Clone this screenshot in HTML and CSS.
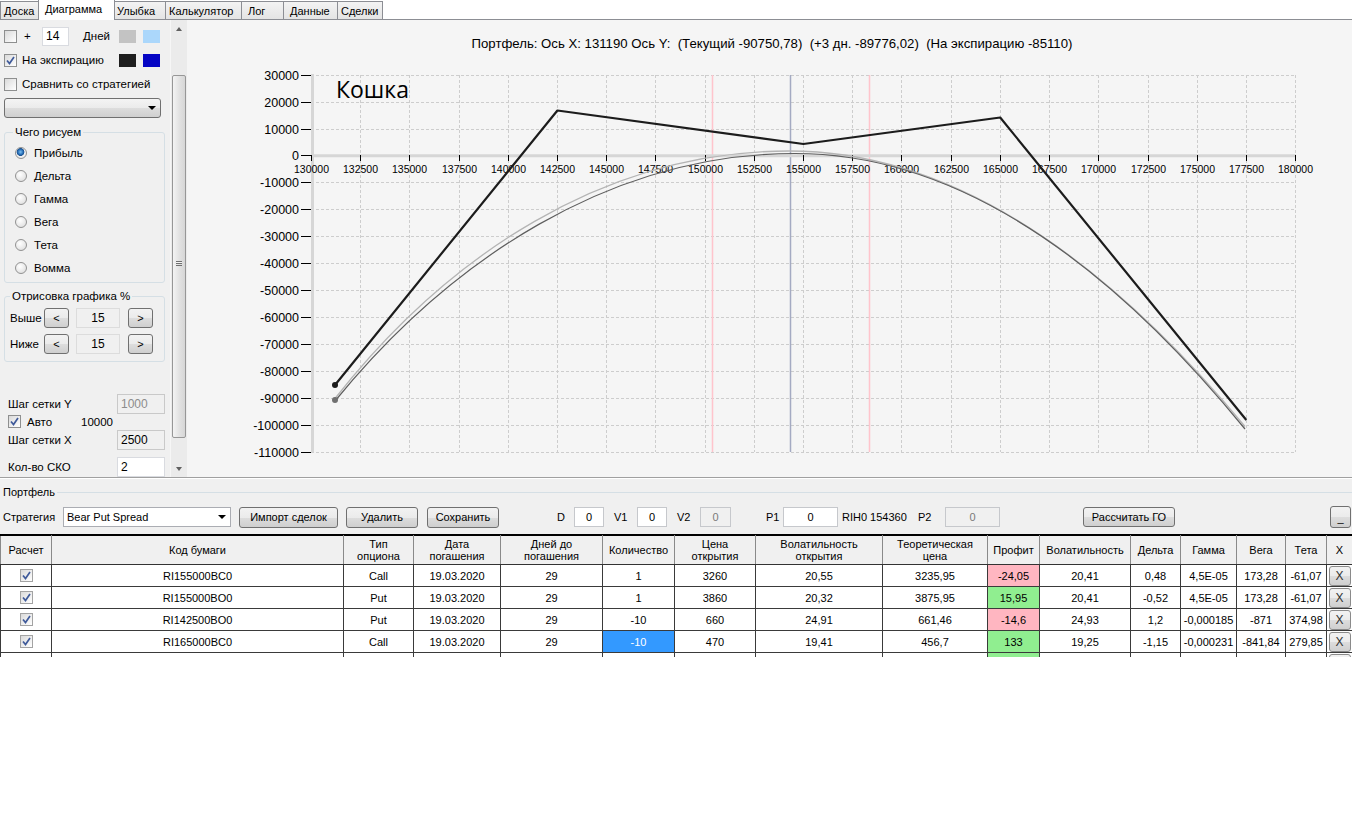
FILE: index.html
```html
<!DOCTYPE html>
<html lang="ru">
<head>
<meta charset="utf-8">
<title>Диаграмма</title>
<link rel="stylesheet" href="styles.css">
</head>
<body>
<div class="tabs">
  <div class="tab t1">Доска</div>
  <div class="tab t2 active">Диаграмма</div>
  <div class="tab t3">Улыбка</div>
  <div class="tab t4">Калькулятор</div>
  <div class="tab t5">Лог</div>
  <div class="tab t6">Данные</div>
  <div class="tab t7">Сделки</div>
</div>

<div class="main">
  <div class="sidebar">
    <div class="srow">
      <span class="cb"></span>
      <span class="plus">+</span>
      <span class="tb days">14</span>
      <span class="dn">Дней</span>
      <span class="sw sw-gray"></span>
      <span class="sw sw-lblue"></span>
    </div>
    <div class="srow">
      <span class="cb"><svg viewBox="0 0 11 11"><path d="M2 5.5 L4.5 8.5 L9 2" /></svg></span>
      <span class="slbl w97">На экспирацию</span>
      <span class="sw sw-black"></span>
      <span class="sw sw-blue"></span>
    </div>
    <div class="srow">
      <span class="cb"></span>
      <span class="slbl">Сравнить со стратегией</span>
    </div>
    <div class="scombo"><span class="arrow"></span></div>

    <fieldset class="grp g1">
      <legend>Чего рисуем</legend>
      <div class="rrow"><span class="rb on"></span><span>Прибыль</span></div>
      <div class="rrow"><span class="rb"></span><span>Дельта</span></div>
      <div class="rrow"><span class="rb"></span><span>Гамма</span></div>
      <div class="rrow"><span class="rb"></span><span>Вега</span></div>
      <div class="rrow"><span class="rb"></span><span>Тета</span></div>
      <div class="rrow"><span class="rb"></span><span>Вомма</span></div>
    </fieldset>

    <fieldset class="grp g2">
      <legend>Отрисовка графика %</legend>
      <div class="nrow"><span class="nlbl">Выше</span><span class="btn sbtn">&lt;</span><span class="tb num">15</span><span class="btn sbtn">&gt;</span></div>
      <div class="nrow"><span class="nlbl">Ниже</span><span class="btn sbtn">&lt;</span><span class="tb num">15</span><span class="btn sbtn">&gt;</span></div>
    </fieldset>

    <div class="prow pa"><span class="plbl">Шаг сетки Y</span><span class="tb ptb dis">1000</span></div>
    <div class="prow pb"><span class="cb"><svg viewBox="0 0 11 11"><path d="M2 5.5 L4.5 8.5 L9 2" /></svg></span><span class="auto">Авто</span><span class="autov">10000</span></div>
    <div class="prow pc"><span class="plbl">Шаг сетки X</span><span class="tb ptb ro">2500</span></div>
    <div class="prow pd"><span class="plbl">Кол-во СКО</span><span class="tb ptb">2</span></div>
  </div>

  <div class="vscroll">
    <div class="sarrow up"></div>
    <div class="strack">
      <div class="thumb"><span class="grip"></span></div>
    </div>
    <div class="sarrow down"></div>
  </div>

  <div class="chart">
    <svg class="plot" width="1165" height="457" viewBox="187 20 1165 457">
      <text class="title" x="772" y="48">Портфель: Ось X: 131190 Ось Y:  (Текущий -90750,78)  (+3 дн. -89776,02)  (На экспирацию -85110)</text>
      <path class="gridl" d="M311 75.5H1296M311 102.5H1296M311 129.5H1296M311 182.5H1296M311 209.5H1296M311 236.5H1296M311 263.5H1296M311 290.5H1296M311 317.5H1296M311 344.5H1296M311 371.5H1296M311 398.5H1296M311 425.5H1296M311 452.5H1296M360.5 75V452M409.5 75V452M459.5 75V452M508.5 75V452M557.5 75V452M606.5 75V452M655.5 75V452M705.5 75V452M754.5 75V452M803.5 75V452M852.5 75V452M901.5 75V452M951.5 75V452M1000.5 75V452M1049.5 75V452M1098.5 75V452M1148.5 75V452M1197.5 75V452M1246.5 75V452M1295.5 75V452"/>
      <line class="vl-pink" x1="712.5" y1="75" x2="712.5" y2="452"/>
      <line class="vl-pink" x1="869.5" y1="75" x2="869.5" y2="452"/>
      <line class="vl-blue" x1="790.5" y1="75" x2="790.5" y2="452"/>
      <line class="axis" x1="311" y1="155.7" x2="1296" y2="155.7"/>
      <line class="axis" x1="312.5" y1="74" x2="312.5" y2="452.5"/>
      <path class="ticks" d="M301 75.5H311M301 102.5H311M301 129.5H311M301 155.5H311M301 182.5H311M301 209.5H311M301 236.5H311M301 263.5H311M301 290.5H311M301 317.5H311M301 344.5H311M301 371.5H311M301 398.5H311M301 425.5H311M301 452.5H311M311.5 155V161M360.5 155V161M409.5 155V161M459.5 155V161M508.5 155V161M557.5 155V161M606.5 155V161M655.5 155V161M705.5 155V161M754.5 155V161M803.5 155V161M852.5 155V161M901.5 155V161M951.5 155V161M1000.5 155V161M1049.5 155V161M1098.5 155V161M1148.5 155V161M1197.5 155V161M1246.5 155V161M1295.5 155V161"/>
      <g class="ylab">
        <text x="299" y="80">30000</text>
        <text x="299" y="107">20000</text>
        <text x="299" y="134">10000</text>
        <text x="299" y="160">0</text>
        <text x="299" y="187">-10000</text>
        <text x="299" y="214">-20000</text>
        <text x="299" y="241">-30000</text>
        <text x="299" y="268">-40000</text>
        <text x="299" y="295">-50000</text>
        <text x="299" y="322">-60000</text>
        <text x="299" y="349">-70000</text>
        <text x="299" y="376">-80000</text>
        <text x="299" y="403">-90000</text>
        <text x="299" y="430">-100000</text>
        <text x="299" y="457">-110000</text>
      </g>
      <g class="xlab">
        <text x="311.5" y="172.5">130000</text>
        <text x="360.5" y="172.5">132500</text>
        <text x="409.5" y="172.5">135000</text>
        <text x="459.5" y="172.5">137500</text>
        <text x="508.5" y="172.5">140000</text>
        <text x="557.5" y="172.5">142500</text>
        <text x="606.5" y="172.5">145000</text>
        <text x="655.5" y="172.5">147500</text>
        <text x="705.5" y="172.5">150000</text>
        <text x="754.5" y="172.5">152500</text>
        <text x="803.5" y="172.5">155000</text>
        <text x="852.5" y="172.5">157500</text>
        <text x="901.5" y="172.5">160000</text>
        <text x="951.5" y="172.5">162500</text>
        <text x="1000.5" y="172.5">165000</text>
        <text x="1049.5" y="172.5">167500</text>
        <text x="1098.5" y="172.5">170000</text>
        <text x="1148.5" y="172.5">172500</text>
        <text x="1197.5" y="172.5">175000</text>
        <text x="1246.5" y="172.5">177500</text>
        <text x="1295.5" y="172.5">180000</text>
      </g>
      <path class="cur-light" d="M335 398.5 C447 256 604 151 789 151 Q1016 151 1245 426.5"/>
      <path class="cur-dark" d="M335 401 C450 260 610 153.5 795 153.5 Q1020 153.5 1245 429"/>
      <polyline class="expiry" points="335,385 557.4,110.5 803.4,144 1000.2,117.5 1246.3,420"/>
      <circle class="dot-dark" cx="335" cy="385" r="3"/>
      <circle class="dot-gray" cx="335" cy="400" r="3"/>
      <text class="name" x="336" y="98">Кошка</text>
    </svg>
  </div>
</div>

<div class="portfolio">
  <div class="ptitle"><span>Портфель</span><span class="pline"></span></div>
  <div class="toolbar">
    <span class="lbl l-strat">Стратегия</span>
    <span class="combo"><span class="ctext">Bear Put Spread</span><span class="arrow"></span></span>
    <span class="btn b-import">Импорт сделок</span>
    <span class="btn b-del">Удалить</span>
    <span class="btn b-save">Сохранить</span>
    <span class="lbl l-d">D</span>
    <span class="tb in30">0</span>
    <span class="lbl l-v1">V1</span>
    <span class="tb in30">0</span>
    <span class="lbl l-v2">V2</span>
    <span class="tb in31 dis">0</span>
    <span class="lbl l-p1">P1</span>
    <span class="tb in55">0</span>
    <span class="lbl l-rih">RIH0 154360</span>
    <span class="lbl l-p2">P2</span>
    <span class="tb in55 dis">0</span>
    <span class="btn b-go">Рассчитать ГО</span>
    <span class="btn b-min">_</span>
  </div>
</div>

<div class="gridwrap">
  <table class="grid">
    <colgroup>
      <col class="c1"><col class="c2"><col class="c3"><col class="c4"><col class="c5"><col class="c6"><col class="c7"><col class="c8"><col class="c9"><col class="c10"><col class="c11"><col class="c12"><col class="c13"><col class="c14"><col class="c15"><col class="c16">
    </colgroup>
    <thead>
      <tr>
        <th>Расчет</th><th>Код бумаги</th><th>Тип<br>опциона</th><th>Дата<br>погашения</th><th>Дней до<br>погашения</th><th>Количество</th><th>Цена<br>открытия</th><th>Волатильность<br>открытия</th><th>Теоретическая<br>цена</th><th>Профит</th><th>Волатильность</th><th>Дельта</th><th>Гамма</th><th>Вега</th><th>Тета</th><th>X</th>
      </tr>
    </thead>
    <tbody>
      <tr>
        <td><span class="cb gcb"><svg viewBox="0 0 11 11"><path d="M2 5.5 L4.5 8.5 L9 2" /></svg></span></td>
        <td>RI155000BC0</td><td>Call</td><td>19.03.2020</td><td>29</td><td>1</td><td>3260</td><td>20,55</td><td>3235,95</td><td class="neg">-24,05</td><td>20,41</td><td>0,48</td><td>4,5E-05</td><td>173,28</td><td>-61,07</td>
        <td class="xc"><span class="btn xbtn">X</span></td>
      </tr>
      <tr>
        <td><span class="cb gcb"><svg viewBox="0 0 11 11"><path d="M2 5.5 L4.5 8.5 L9 2" /></svg></span></td>
        <td>RI155000BO0</td><td>Put</td><td>19.03.2020</td><td>29</td><td>1</td><td>3860</td><td>20,32</td><td>3875,95</td><td class="pos">15,95</td><td>20,41</td><td>-0,52</td><td>4,5E-05</td><td>173,28</td><td>-61,07</td>
        <td class="xc"><span class="btn xbtn">X</span></td>
      </tr>
      <tr>
        <td><span class="cb gcb"><svg viewBox="0 0 11 11"><path d="M2 5.5 L4.5 8.5 L9 2" /></svg></span></td>
        <td>RI142500BO0</td><td>Put</td><td>19.03.2020</td><td>29</td><td>-10</td><td>660</td><td>24,91</td><td>661,46</td><td class="neg">-14,6</td><td>24,93</td><td>1,2</td><td>-0,000185</td><td>-871</td><td>374,98</td>
        <td class="xc"><span class="btn xbtn">X</span></td>
      </tr>
      <tr>
        <td><span class="cb gcb"><svg viewBox="0 0 11 11"><path d="M2 5.5 L4.5 8.5 L9 2" /></svg></span></td>
        <td>RI165000BC0</td><td>Call</td><td>19.03.2020</td><td>29</td><td class="sel">-10</td><td>470</td><td>19,41</td><td>456,7</td><td class="pos">133</td><td>19,25</td><td>-1,15</td><td>-0,000231</td><td>-841,84</td><td>279,85</td>
        <td class="xc"><span class="btn xbtn">X</span></td>
      </tr>
      <tr>
        <td></td><td></td><td></td><td></td><td></td><td></td><td></td><td></td><td></td><td class="pos"></td><td></td><td></td><td></td><td></td><td></td>
        <td class="xc"><span class="btn xbtn"></span></td>
      </tr>
    </tbody>
  </table>
</div>
</body>
</html>
```

FILE: styles.css
```css
html, body {
  margin: 0;
  padding: 0;
}
body {
  width: 1352px;
  height: 816px;
  overflow: hidden;
  background: #ffffff;
  font-family: "Liberation Sans", Arial, sans-serif;
  font-size: 11px;
  color: #000;
}

/* ---------- tabs ---------- */
.tabs {
  display: flex;
  align-items: flex-end;
  height: 20px;
  box-sizing: border-box;
  border-bottom: 1px solid #8c8e94;
  background: #ffffff;
}
.tab {
  height: 18px;
  box-sizing: border-box;
  border: 1px solid #8c8e94;
  border-bottom: none;
  margin-right: -1px;
  margin-bottom: 0;
  background: linear-gradient(#f3f3f3, #e4e4e4);
  display: flex;
  align-items: center;
  padding-left: 3px;
  font-size: 11px;
  line-height: 14px;
}
.tab.active {
  height: 21px;
  margin-bottom: -1px;
  margin-left: -2px;
  margin-right: -2px;
  background: #ffffff;
  z-index: 2;
  padding-left: 6px;
  padding-bottom: 3px;
}
.t1 { width: 41px; }
.t2 { width: 77px; }
.t3 { width: 53px; }
.t4 { width: 77px; }
.t5 { width: 43px; padding-left: 6px; }
.t6 { width: 55px; padding-left: 6px; }
.t7 { width: 46px; }

/* ---------- main ---------- */
.main {
  display: flex;
  height: 457px;
}
.sidebar {
  width: 170px;
  flex: none;
  background: #f0f0f0;
  box-sizing: border-box;
  padding: 4px 0 0 4px;
  font-size: 11.5px;
}
.srow {
  height: 24px;
  display: flex;
  align-items: center;
}
.cb {
  width: 13px;
  height: 13px;
  box-sizing: border-box;
  border: 1px solid #8e8f8f;
  background: linear-gradient(135deg, #dadada 0%, #f4f4f4 70%, #ffffff 100%);
  display: inline-flex;
  align-items: center;
  justify-content: center;
  flex: none;
}
.cb svg {
  width: 11px;
  height: 11px;
}
.cb path {
  fill: none;
  stroke: #3f5a9a;
  stroke-width: 1.7;
}
.plus {
  margin-left: 7px;
  width: 18px;
}
.tb {
  box-sizing: border-box;
  height: 19px;
  border: 1px solid #d9dbe0;
  background: #ffffff;
  display: inline-flex;
  align-items: center;
  padding-left: 3px;
  flex: none;
}
.days {
  width: 27px;
  font-size: 12px;
}
.dn {
  margin-left: 14px;
  width: 36px;
}
.sw {
  width: 17px;
  height: 13px;
  flex: none;
}
.sw + .sw { margin-left: 7px; }
.sw-gray { background: #c3c3c3; }
.sw-lblue { background: #abd7fb; }
.sw-black { background: #1e1e1e; }
.sw-blue { background: #0505c4; }
.slbl { margin-left: 5px; }
.w97 { width: 97px; }

.scombo {
  margin-top: 2px;
  width: 157px;
  height: 20px;
  box-sizing: border-box;
  border: 1px solid #707070;
  border-radius: 3px;
  background: linear-gradient(#f4f4f4 0%, #ebebeb 50%, #dddddd 51%, #d0d0d0 100%);
  display: flex;
  align-items: center;
  justify-content: flex-end;
  padding-right: 4px;
}
.arrow {
  width: 0;
  height: 0;
  border-left: 4px solid transparent;
  border-right: 4px solid transparent;
  border-top: 4px solid #000;
}

.grp {
  margin: 0;
  width: 161px;
  box-sizing: border-box;
  border: 1px solid #d5dfe5;
  border-radius: 3px;
  padding: 0 0 0 8px;
}
.grp legend {
  padding: 0 2px;
  margin-left: 0;
  line-height: 13px;
  font-size: 11.5px;
}
.g1 {
  margin-top: 8px;
  padding-top: 2px;
  padding-bottom: 3px;
}
.rrow {
  height: 23px;
  display: flex;
  align-items: center;
}
.rb {
  width: 12px;
  height: 12px;
  box-sizing: border-box;
  border-radius: 50%;
  border: 1px solid #929292;
  background: radial-gradient(circle at 40% 35%, #ffffff 0%, #e8e8e8 60%, #d6d6d6 100%);
  margin-right: 7px;
  margin-left: 2px;
  flex: none;
}
.rb.on {
  background: radial-gradient(circle at 45% 40%, #7cc0f2 0px, #2a70b8 2.5px, #184f8e 3.6px, #f4f4f4 4.2px, #dedede 100%);
}
.g2 {
  margin-top: 7px;
  padding-top: 2px;
  padding-bottom: 4px;
  padding-left: 5px;
}
.nrow {
  height: 26px;
  display: flex;
  align-items: center;
}
.nlbl { width: 34px; font-size: 11.5px; }
.btn {
  box-sizing: border-box;
  border: 1px solid #707070;
  border-radius: 3px;
  background: linear-gradient(#f2f2f2 0%, #ebebeb 50%, #dddddd 51%, #cfcfcf 100%);
  display: inline-flex;
  align-items: center;
  justify-content: center;
  flex: none;
  font-size: 11px;
}
.sbtn {
  width: 25px;
  height: 20px;
  font-size: 11px;
}
.num {
  width: 44px;
  height: 20px;
  margin: 0 8px 0 7px;
  justify-content: center;
  padding-left: 0;
  background: #f0f0f0;
  border-color: #dcdcdc;
  font-size: 12px;
}

.prow {
  display: flex;
  align-items: center;
  padding-left: 4px;
}
.plbl { width: 109px; }
.ptb {
  width: 48px;
  height: 20px;
  font-size: 12px;
}
.ptb.dis {
  background: #f0f0f0;
  color: #8c8c8c;
  border-color: #c9c9c9;
}
.ptb.ro {
  background: #f0f0f0;
  border-color: #c9c9c9;
}
.pa { margin-top: 32px; height: 20px; }
.pb { height: 15px; }
.auto { margin-left: 6px; width: 54px; }
.pc { margin-top: 1px; height: 20px; }
.pd { margin-top: 7px; height: 20px; }

/* ---------- scrollbar ---------- */
.vscroll {
  width: 17px;
  flex: none;
  background: #ebebeb;
  display: flex;
  flex-direction: column;
  border-left: 1px solid #f6f6f6;
  box-sizing: border-box;
}
.sarrow {
  height: 17px;
  display: flex;
  align-items: center;
  justify-content: center;
}
.sarrow::before {
  content: "";
  width: 0;
  height: 0;
  border-left: 3.5px solid transparent;
  border-right: 3.5px solid transparent;
}
.sarrow.up::before { border-bottom: 4px solid #606060; }
.sarrow.down::before { border-top: 4px solid #606060; }
.strack {
  flex: 1;
  padding-top: 38px;
  padding-bottom: 22px;
  display: flex;
}
.thumb {
  flex: 1;
  margin: 0 1px;
  border: 1px solid #979797;
  border-radius: 2px;
  background: linear-gradient(90deg, #f4f4f4, #e3e3e3 50%, #d6d6d6);
  display: flex;
  align-items: center;
  justify-content: center;
}
.grip {
  width: 6px;
  height: 5px;
  border-top: 1px solid #6f6f6f;
  border-bottom: 1px solid #6f6f6f;
  box-sizing: border-box;
  background: linear-gradient(#f5f5f5 0 1px, #6f6f6f 1px 2px, transparent 2px);
  margin-top: 14px;
}

/* ---------- chart ---------- */
.chart {
  flex: 1;
  background: #f5f5f5;
  overflow: hidden;
}
.plot {
  display: block;
  font-family: "Liberation Sans", Arial, sans-serif;
}
.title {
  font-size: 13.2px;
  text-anchor: middle;
  white-space: pre;
  fill: #000;
}
.gridl {
  fill: none;
  stroke: #cdcdcd;
  stroke-width: 1;
  stroke-dasharray: 3 2;
}
.vl-pink {
  stroke: #ffc4cc;
  stroke-width: 1.5;
}
.vl-blue {
  stroke: #a4aac2;
  stroke-width: 1.5;
}
.axis {
  stroke: #d6d6d6;
  stroke-width: 3;
}
.ticks {
  fill: none;
  stroke: #000;
  stroke-width: 1;
}
.ylab text {
  font-size: 12.5px;
  text-anchor: end;
  fill: #000;
}
.xlab text {
  font-size: 10.5px;
  text-anchor: middle;
  fill: #000;
}
.cur-light {
  fill: none;
  stroke: #b4b4b4;
  stroke-width: 1.3;
}
.cur-dark {
  fill: none;
  stroke: #5e5e5e;
  stroke-width: 1.2;
}
.expiry {
  fill: none;
  stroke: #1c1c1c;
  stroke-width: 2.2;
  stroke-linejoin: round;
}
.dot-dark { fill: #1c1c1c; }
.dot-gray { fill: #707070; }
.name {
  font-family: "Open Sans", "Noto Sans", sans-serif;
  font-size: 23px;
  fill: #000;
}

/* ---------- portfolio ---------- */
.portfolio {
  background: #f0f0f0;
  border-top: 1px solid #a0a0a0;
  box-shadow: inset 0 1px 0 #ffffff;
  height: 57px;
  box-sizing: border-box;
  padding-top: 7px;
}
.ptitle {
  display: flex;
  align-items: center;
  height: 14px;
  padding-left: 3px;
}
.pline {
  flex: 1;
  border-top: 1px solid #d5dfe5;
  margin-left: 2px;
}
.toolbar {
  display: flex;
  align-items: center;
  height: 22px;
  margin-top: 7px;
}
.lbl { flex: none; }
.l-strat { padding-left: 3px; box-sizing: border-box; width: 63px; }
.combo {
  width: 168px;
  height: 20px;
  box-sizing: border-box;
  border: 1px solid #abadb3;
  background: #ffffff;
  display: flex;
  align-items: center;
  justify-content: space-between;
  padding: 0 4px 0 3px;
  flex: none;
}
.b-import { margin-left: 8px; width: 99px; height: 21px; }
.b-del { margin-left: 8px; width: 72px; height: 21px; }
.b-save { margin-left: 9px; width: 72px; height: 21px; }
.l-d { margin-left: 58px; width: 17px; }
.l-v1 { margin-left: 10px; width: 23px; }
.l-v2 { margin-left: 10px; width: 23px; }
.l-p1 { margin-left: 35px; width: 17px; }
.l-rih { margin-left: 4px; width: 76px; }
.l-p2 { width: 27px; }
.toolbar .tb {
  height: 20px;
  justify-content: center;
  padding-left: 0;
  border-color: #c6c8cc;
  font-size: 11px;
}
.in30 { width: 30px; }
.in31 { width: 31px; }
.in55 { width: 55px; }
.toolbar .tb.dis {
  background: #f0f0f0;
  color: #7a7a7a;
}
.b-go { margin-left: 83px; width: 92px; height: 20px; }
.b-min {
  margin-left: 155px;
  width: 21px;
  height: 22px;
  align-items: flex-end;
  padding-bottom: 3px;
}

/* ---------- grid ---------- */
.gridwrap {
  height: 122px;
  overflow: hidden;
  border-top: 1px solid #000;
  background: #ffffff;
}
.grid {
  border-collapse: collapse;
  table-layout: fixed;
  width: 1352px;
}
.c1 { width: 51px; }
.c2 { width: 292px; }
.c3 { width: 70px; }
.c4 { width: 87px; }
.c5 { width: 102px; }
.c6 { width: 72px; }
.c7 { width: 81px; }
.c8 { width: 127px; }
.c9 { width: 105px; }
.c10 { width: 52px; }
.c11 { width: 91px; }
.c12 { width: 50px; }
.c13 { width: 56px; }
.c14 { width: 49px; }
.c15 { width: 41px; }
.c16 { width: 26px; }
.grid th {
  height: 28px;
  padding: 0;
  background: #f0f0f0;
  font-weight: normal;
  line-height: 12px;
  border: 1px solid #8a8a8a;
  border-top: 1px solid #000;
  border-bottom: 1px solid #333;
  text-align: center;
  vertical-align: middle;
  overflow: hidden;
  white-space: nowrap;
}
.grid td {
  height: 21px;
  padding: 0;
  border: 1px solid #3a3a3a;
  text-align: center;
  vertical-align: middle;
  white-space: nowrap;
  overflow: hidden;
  background: #ffffff;
}
.grid td.neg { background: #ffb6c1; }
.grid td.pos { background: #90ee90; }
.grid td.sel { background: #3399ff; color: #ffffff; }
.gcb {
  vertical-align: middle;
  border-color: #a3a3a3;
}
.grid td.xc { padding: 0 1px; }
.xbtn {
  width: 22px;
  height: 20px;
  font-size: 12px;
  color: #333;
  border-color: #8a8a8a;
  vertical-align: middle;
}
```
